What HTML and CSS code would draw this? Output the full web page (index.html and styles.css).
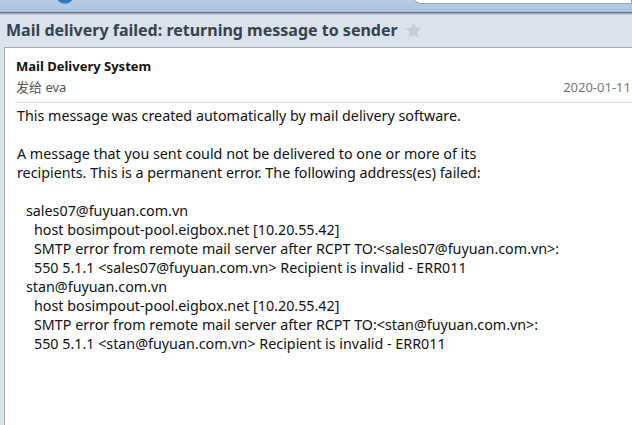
FILE: index.html
```html
<!DOCTYPE html>
<html>
<head>
<meta charset="utf-8">
<link rel="stylesheet" href="styles.css">
</head>
<body>
<div class="topbar">
  <div class="globe"></div>
  <div class="search"></div>
</div>
<div class="titlebar">
  <h1 class="subject">Mail delivery failed: returning message to sender</h1>
  <svg class="star" width="17" height="16" viewBox="0 0 24 23"><path d="M12 0.8l3.4 7.2 7.8 1-5.7 5.4 1.4 7.8L12 18.4l-6.9 3.8 1.4-7.8L0.8 9l7.8-1z" fill="#c9cdd3"/></svg>
</div>
<div class="panel">
  <div class="head">
    <div class="sender">Mail Delivery System</div>
    <div class="meta">
      <span class="to">发给 eva</span>
      <span class="date">2020-01-11</span>
    </div>
  </div>
  <div class="body">
    <p>This message was created automatically by mail delivery software.</p>
    <p>A message that you sent could not be delivered to one or more of its<br>recipients. This is a permanent error. The following address(es) failed:</p>
    <div class="failures">
      <div class="addr">sales07@fuyuan.com.vn</div>
      <div class="detail">host bosimpout-pool.eigbox.net [10.20.55.42]</div>
      <div class="detail">SMTP error from remote mail server after RCPT TO:&lt;sales07@fuyuan.com.vn&gt;:</div>
      <div class="detail">550 5.1.1 &lt;sales07@fuyuan.com.vn&gt; Recipient is invalid - ERR011</div>
      <div class="addr">stan@fuyuan.com.vn</div>
      <div class="detail">host bosimpout-pool.eigbox.net [10.20.55.42]</div>
      <div class="detail">SMTP error from remote mail server after RCPT TO:&lt;stan@fuyuan.com.vn&gt;:</div>
      <div class="detail">550 5.1.1 &lt;stan@fuyuan.com.vn&gt; Recipient is invalid - ERR011</div>
    </div>
  </div>
</div>
</body>
</html>
```
FILE: styles.css
```css
* { box-sizing: border-box; }
html, body {
  margin: 0;
  padding: 0;
  width: 632px;
  height: 425px;
  overflow: hidden;
  background: #dbe2ea;
  font-family: "Noto Sans", "Noto Sans CJK SC", sans-serif;
}
body {
  display: flex;
  flex-direction: column;
}
.topbar {
  flex: none;
  height: 16px;
  background: linear-gradient(#b8d1e8, #aac4de);
  border-bottom: 1px solid #5c7187;
  box-shadow: 0 1px 0 #a8afb7, 0 2px 0 #c4cbd3;
  display: flex;
  overflow: hidden;
  margin-top: -3px;
}
.globe {
  width: 20px;
  height: 20px;
  border-radius: 50%;
  margin: -13px 0 0 55px;
  background: radial-gradient(circle at 50% 80%, #2f7fc4, #1d5d98);
  border: 1px solid #6a8fb0;
}
.search {
  margin: -10px 0 0 338px;
  flex: 1;
  height: 17px;
  background: #fff;
  border: 1px solid #8ea6be;
  border-radius: 8px 0 0 8px;
}
.titlebar {
  flex: none;
  display: flex;
  align-items: center;
  height: 34px;
  padding: 0 0 0 6px;
}
.subject {
  margin: 0;
  font-size: 16px;
  font-weight: bold;
  color: #36424f;
  white-space: nowrap;
}
.star { margin-left: 7px; margin-top: 0; }
.panel {
  flex: 1;
  min-height: 0;
  overflow: hidden;
  margin-left: 4px;
  background: #fff;
  border: 1px solid #a3abb3;
  border-right: none;
  border-bottom: none;
}
.head {
  margin-left: 11px;
  border-bottom: 1px solid #dcdcdc;
  padding: 9px 0 6px 0;
}
.sender {
  font-size: 13px;
  font-weight: bold;
  color: #111;
  line-height: 18px;
}
.meta {
  display: flex;
  justify-content: space-between;
  font-size: 13px;
  line-height: 18px;
  margin-top: 3px;
  margin-right: 1px;
}
.to { color: #555; }
.date { color: #777; }
.body {
  padding: 3px 0 0 12px;
  font-size: 14.3px;
  line-height: 19px;
  color: #111;
}
.body p { margin: 0 0 19px 0; }
.addr { padding-left: 9px; }
.detail { padding-left: 17px; }
```
